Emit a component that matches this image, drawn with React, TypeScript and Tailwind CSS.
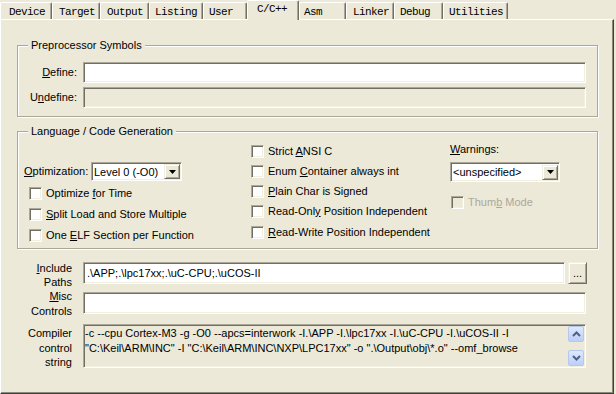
import { ReactNode } from "react";

const sunken =
  "border border-t-[#aca899] border-l-[#aca899] border-b-white border-r-white shadow-[inset_1px_1px_0_#716f64,inset_-1px_-1px_0_#f1efe2]";
const raised =
  "border border-t-[#f1efe2] border-l-[#f1efe2] border-b-[#716f64] border-r-[#716f64] shadow-[inset_1px_1px_0_#ffffff,inset_-1px_-1px_0_#aca899]";

type TTab = { label: string; cls: string; active?: boolean };

const tabs: TTab[] = [
  { label: "Device", cls: "w-[52px] pl-[8px]" },
  { label: "Target", cls: "w-[48px] pl-[6px]" },
  { label: "Output", cls: "w-[49px] pl-[6px]" },
  { label: "Listing", cls: "w-[54px] pl-[5px]" },
  { label: "User", cls: "w-[44px] pl-[5px]" },
  { label: "C/C++", cls: "w-[52px] pl-[9px]", active: true },
  { label: "Asm", cls: "w-[47px] pl-[4px]" },
  { label: "Linker", cls: "w-[48px] pl-[6px]" },
  { label: "Debug", cls: "w-[49px] pl-[5px]" },
  { label: "Utilities", cls: "w-[65px] pl-[5px]" },
];

function Tab({ tab }: { tab: TTab }) {
  if (tab.active) {
    return (
      <div
        className={`${tab.cls} relative z-10 h-[20px] -mb-[1px] bg-[#ece9d8] border-t border-l border-t-white border-l-white border-r border-r-[#716f64] shadow-[inset_-1px_0_0_#aca899] rounded-t-[2px] pt-[1px] leading-[14px]`}
      >
        {tab.label}
      </div>
    );
  }
  return (
    <div
      className={`${tab.cls} h-[17px] border-t border-l border-t-white border-l-white border-r border-r-[#716f64] shadow-[inset_-1px_0_0_#aca899] rounded-t-[2px] pt-[2px] leading-[14px]`}
    >
      {tab.label}
    </div>
  );
}

function Group({ title, className, children }: { title: string; className: string; children: ReactNode }) {
  return (
    <div
      className={`relative border border-[#aca899] shadow-[inset_1px_1px_0_#fff,1px_1px_0_#fff] ${className}`}
    >
      <span className="absolute -top-[8px] left-[10px] bg-[#ece9d8] px-[3px] leading-[14px]">{title}</span>
      {children}
    </div>
  );
}

function Check({ children, disabled }: { children: ReactNode; disabled?: boolean }) {
  return (
    <div className="flex items-center h-[20px] gap-[4px]">
      <span className={`w-[13px] h-[13px] ${sunken} ${disabled ? "bg-[#ece9d8]" : "bg-white"}`}></span>
      <span className={disabled ? "text-[#aca899]" : ""}>{children}</span>
    </div>
  );
}

function DropArrow() {
  return (
    <span className={`w-[16px] h-[15px] ${raised} bg-[#ece9d8] flex items-center justify-center`}>
      <svg width="7" height="4" viewBox="0 0 7 4">
        <path d="M0 0 H7 L3.5 4 Z" fill="#000" />
      </svg>
    </span>
  );
}

function Select({ value, className }: { value: string; className: string }) {
  return (
    <div className={`${sunken} bg-white flex items-center pr-[1px] ${className}`}>
      <span className="flex-1 pl-[2px] leading-[14px]">{value}</span>
      <DropArrow />
    </div>
  );
}

function ScrollBtn({ up }: { up?: boolean }) {
  return (
    <span className="w-[16px] h-[16px] rounded-[2px] border border-[#b6c8f0] bg-[linear-gradient(180deg,#dfe8fd,#bccff8)] flex items-center justify-center">
      <svg width="9" height="6" viewBox="0 0 9 6">
        <path
          d={up ? "M1 5 L4.5 1.5 L8 5" : "M1 1 L4.5 4.5 L8 1"}
          stroke="#4d6185"
          strokeWidth="2"
          fill="none"
        />
      </svg>
    </span>
  );
}

function App() {
  return (
    <div className="w-[616px] h-[394px] bg-[#ece9d8] overflow-hidden text-[11px] text-black font-['Liberation_Sans',Arial,sans-serif]">
      <div className="flex items-end h-[19px] font-['Liberation_Mono','DejaVu_Sans_Mono',monospace] text-[11px] tracking-[-0.6px]">
        {tabs.map((t) => (
          <Tab key={t.label} tab={t} />
        ))}
      </div>

      <div className="w-[614px] h-[375px] border-t border-l border-t-white border-l-white border-r border-b border-r-[#404040] border-b-[#404040] shadow-[inset_-1px_-1px_0_#8a8878] pl-[16px]">
        <Group title="Preprocessor Symbols" className="w-[581px] h-[72px] mt-[25px] pt-[16px]">
          <div className="flex items-center">
            <span className="w-[59px] text-right">
              <u>D</u>efine:
            </span>
            <div className={`ml-[6px] w-[503px] h-[21px] ${sunken} bg-white`}></div>
          </div>
          <div className="flex items-center mt-[4px]">
            <span className="w-[59px] text-right">
              U<u>n</u>define:
            </span>
            <div className={`ml-[6px] w-[503px] h-[21px] ${sunken} bg-[#ece9d8]`}></div>
          </div>
        </Group>

        <Group title="Language / Code Generation" className="w-[581px] h-[118px] mt-[14px] flex">
          <div className="ml-[6px] w-[227px] pt-[30px]">
            <div className="flex items-center h-[19px]">
              <span className="w-[67px]">
                <u>O</u>ptimization:
              </span>
              <Select value="Level 0 (-O0)" className="w-[91px] h-[19px]" />
            </div>
            <div className="mt-[2px] pl-[5px] flex flex-col">
              <div className="h-[21px] flex items-center">
                <Check>
                  Optimize <u>f</u>or Time
                </Check>
              </div>
              <div className="h-[21px] flex items-center">
                <Check>
                  <u>S</u>plit Load and Store Multiple
                </Check>
              </div>
              <div className="h-[21px] flex items-center">
                <Check>
                  One <u>E</u>LF Section per Function
                </Check>
              </div>
            </div>
          </div>

          <div className="w-[199px] pt-[9px]">
            <Check>
              Strict <u>A</u>NSI C
            </Check>
            <Check>
              Enum <u>C</u>ontainer always int
            </Check>
            <Check>
              <u>P</u>lain Char is Signed
            </Check>
            <Check>
              Read-Onl<u>y</u> Position Independent
            </Check>
            <div className="h-[21px] flex items-end">
              <Check>
                <u>R</u>ead-Write Position Independent
              </Check>
            </div>
          </div>

          <div className="pt-[9px]">
            <div className="h-[16px] leading-[16px]">
              <u>W</u>arnings:
            </div>
            <Select value="<unspecified>" className="mt-[5px] w-[110px] h-[20px]" />
            <div className="mt-[10px] pl-[1px]">
              <Check disabled>
                Thum<u>b</u> Mode
              </Check>
            </div>
          </div>
        </Group>

        <div className="mt-[13px] h-[22px] flex items-start">
          <div className="w-[55px] text-right leading-[14px] -mt-[1px]">
            <div>
              <u>I</u>nclude
            </div>
            <div>Paths</div>
          </div>
          <div className={`ml-[11px] w-[482px] h-[22px] ${sunken} bg-white flex items-center pl-[3px]`}>
            {".\\APP;.\\lpc17xx;.\\uC-CPU;.\\uCOS-II"}
          </div>
          <div className={`ml-[3px] w-[19px] h-[22px] ${raised} bg-[#ece9d8] flex items-center justify-center leading-[10px]`}>
            ...
          </div>
        </div>

        <div className="mt-[8px] h-[22px] flex items-start">
          <div className="w-[55px] text-right leading-[15px] -mt-[3px]">
            <div>
              <u>M</u>isc
            </div>
            <div>Controls</div>
          </div>
          <div className={`ml-[11px] w-[503px] h-[22px] ${sunken} bg-white`}></div>
        </div>

        <div className="mt-[10px] h-[44px] flex items-start">
          <div className="w-[55px] text-right leading-[14.5px] mt-[2px]">
            <div>Compiler</div>
            <div>control</div>
            <div>string</div>
          </div>
          <div className={`ml-[11px] w-[503px] h-[44px] ${sunken} bg-[#ece9d8] flex`}>
            <div className="flex-1 pl-[1px] pt-[1px] leading-[15px] whitespace-pre">
              <div>{"-c --cpu Cortex-M3 -g -O0 --apcs=interwork -I.\\APP -I.\\lpc17xx -I.\\uC-CPU -I.\\uCOS-II -I"}</div>
              <div>{"\"C:\\Keil\\ARM\\INC\" -I \"C:\\Keil\\ARM\\INC\\NXP\\LPC17xx\" -o \".\\Output\\obj\\*.o\" --omf_browse"}</div>
            </div>
            <div className="w-[17px] flex flex-col justify-between py-[1px]">
              <ScrollBtn up />
              <ScrollBtn />
            </div>
          </div>
        </div>
      </div>
    </div>
  );
}

export default App;
